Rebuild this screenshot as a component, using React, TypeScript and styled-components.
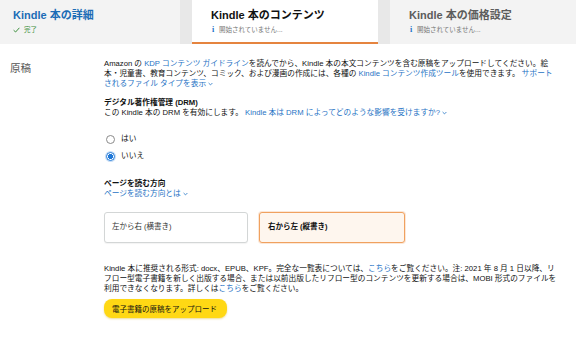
import React from "react";
import styled, { createGlobalStyle } from "styled-components";

const Global = createGlobalStyle`
  html, body { margin: 0; padding: 0; background: #fff; }
  body {
    font-family: "Liberation Sans", "Noto Sans CJK JP", sans-serif;
    color: #0f1111;
    width: 576px;
    height: 346px;
    overflow: hidden;
  }
  * { box-sizing: border-box; }
`;

const Header = styled.header`
  display: flex;
  gap: 12px;
  height: 44px;
  background: #e8e8e8;
`;

const Tab = styled.div<{ $w?: number; $pad: number; $active?: boolean }>`
  flex: ${(p) => (p.$w ? `0 0 ${p.$w}px` : "1 1 0")};
  background: ${(p) => (p.$active ? "#ffffff" : "#f3f3f3")};
  border-bottom: 2px solid ${(p) => (p.$active ? "#e5843f" : "transparent")};
  padding: 8px 0 0 ${(p) => p.$pad}px;
  display: flex;
  flex-direction: column;
  gap: 3px;
`;

const TabTitle = styled.div<{ $tone: "blue" | "dark" | "muted" }>`
  font-size: 11px;
  line-height: 14px;
  font-weight: 700;
  white-space: nowrap;
  color: ${(p) =>
    p.$tone === "blue" ? "#1c6cb6" : p.$tone === "dark" ? "#111111" : "#5c5c5c"};
`;

const TabStatus = styled.div`
  display: flex;
  align-items: center;
  gap: 4px;
  font-size: 6.5px;
  line-height: 9px;
  color: #777;
  white-space: nowrap;
`;

const InfoMark = styled.span`
  color: #1a73c8;
  font-family: "Liberation Serif", serif;
  font-size: 8px;
  font-weight: 700;
  width: 4px;
  text-align: center;
`;

const DoneText = styled.span`
  color: #3d8f3d;
`;

const Body = styled.main`
  display: grid;
  grid-template-columns: 104px 1fr;
  padding-top: 15px;
`;

const SectionLabel = styled.h2`
  margin: 2px 0 0 10px;
  font-size: 10.5px;
  line-height: 14px;
  font-weight: 400;
  color: #555;
`;

const Content = styled.div`
  display: flex;
  flex-direction: column;
  font-size: 7.7px;
  line-height: 10px;
`;

const Para = styled.p<{ $mt?: number }>`
  margin: ${(p) => p.$mt ?? 0}px 0 0;
  white-space: nowrap;
`;

const Heading = styled.h3<{ $mt: number }>`
  margin: ${(p) => p.$mt}px 0 0;
  font-size: 7.7px;
  line-height: 10px;
  font-weight: 700;
`;

const Link = styled.a`
  color: #1e72c4;
  text-decoration: none;
  cursor: pointer;
`;

const Chevron = () => (
  <svg width="5" height="4" viewBox="0 0 5 4" style={{ marginLeft: 2, verticalAlign: "middle" }}>
    <path d="M0.6 1 L2.5 2.9 L4.4 1" fill="none" stroke="#1e72c4" strokeWidth="0.8" />
  </svg>
);

const RadioGroup = styled.div`
  display: flex;
  flex-direction: column;
  gap: 5px;
  margin-top: 15px;
  margin-left: 2px;
`;

const RadioRow = styled.label`
  display: flex;
  align-items: center;
  gap: 6px;
  height: 12px;
  font-size: 7.7px;
`;

const RadioDot = styled.span<{ $checked?: boolean }>`
  width: 9px;
  height: 9px;
  border-radius: 50%;
  border: 1px solid ${(p) => (p.$checked ? "#1f78d8" : "#8a8a8a")};
  background: ${(p) =>
    p.$checked
      ? "radial-gradient(circle, #1f78d8 0 2.3px, #ffffff 2.6px 100%)"
      : "#fff"};
  box-shadow: ${(p) => (p.$checked ? "0 0 0 1px rgba(31,120,216,0.25)" : "none")};
`;

const Choices = styled.div`
  display: flex;
  gap: 11px;
  margin-top: 12.5px;
`;

const Choice = styled.div<{ $selected?: boolean }>`
  width: ${(p) => (p.$selected ? 146 : 144)}px;
  height: 31px;
  display: flex;
  align-items: center;
  padding-left: ${(p) => (p.$selected ? 8 : 7)}px;
  border-radius: 3px;
  border: 1px solid ${(p) => (p.$selected ? "#f0a15f" : "#d3d6d6")};
  background: ${(p) => (p.$selected ? "#fef6ee" : "#fff")};
  font-weight: ${(p) => (p.$selected ? 700 : 400)};
  font-size: 7.5px;
  color: ${(p) => (p.$selected ? "#111" : "#333")};
  box-shadow: ${(p) => (p.$selected ? "0 0 0 1px rgba(240,161,95,0.25)" : "0 1px 1px rgba(0,0,0,0.05)")};
`;

const UploadButton = styled.button`
  align-self: flex-start;
  margin-top: 4.5px;
  width: 123px;
  height: 19px;
  padding: 0 0 0 8px;
  text-align: left;
  border: none;
  border-radius: 8px;
  background: #ffd814;
  font-family: inherit;
  font-size: 7.5px;
  color: #0f1111;
  box-shadow: 0 1px 2px rgba(213, 169, 0, 0.4);
`;

export default function App() {
  return (
    <>
      <Global />
      <Header>
        <Tab $w={180} $pad={13}>
          <TabTitle $tone="blue">Kindle 本の詳細</TabTitle>
          <TabStatus>
            <svg width="7" height="6" viewBox="0 0 7 6">
              <path d="M0.6 3.2 L2.6 5 L6.4 0.8" fill="none" stroke="#3d8f3d" strokeWidth="1" />
            </svg>
            <DoneText>完了</DoneText>
          </TabStatus>
        </Tab>
        <Tab $pad={19} $active>
          <TabTitle $tone="dark">Kindle 本のコンテンツ</TabTitle>
          <TabStatus>
            <InfoMark>i</InfoMark>
            <span>開始されていません...</span>
          </TabStatus>
        </Tab>
        <Tab $pad={19}>
          <TabTitle $tone="muted">Kindle 本の価格設定</TabTitle>
          <TabStatus>
            <InfoMark>i</InfoMark>
            <span>開始されていません...</span>
          </TabStatus>
        </Tab>
      </Header>
      <Body>
        <SectionLabel>原稿</SectionLabel>
        <Content>
          <Para>
            Amazon の <Link>KDP コンテンツ ガイドライン</Link>を読んでから、Kindle 本の本文コンテンツを含む原稿をアップロードしてください。絵
            <br />
            本・児童書、教育コンテンツ、コミック、および漫画の作成には、各種の <Link>Kindle コンテンツ作成ツール</Link>を使用できます。 <Link>サポート</Link>
            <br />
            <Link>
              されるファイル タイプを表示
              <Chevron />
            </Link>
          </Para>
          <Heading $mt={9}>デジタル著作権管理 (DRM)</Heading>
          <Para>
            この Kindle 本の DRM を有効にします。 <Link>Kindle 本は DRM によってどのような影響を受けますか?<Chevron /></Link>
          </Para>
          <RadioGroup>
            <RadioRow>
              <RadioDot />
              はい
            </RadioRow>
            <RadioRow>
              <RadioDot $checked />
              いいえ
            </RadioRow>
          </RadioGroup>
          <Heading $mt={17}>ページを読む方向</Heading>
          <Para>
            <Link>ページを読む方向とは<Chevron /></Link>
          </Para>
          <Choices>
            <Choice>左から右 (横書き)</Choice>
            <Choice $selected>右から左 (縦書き)</Choice>
          </Choices>
          <Para $mt={21.5}>
            Kindle 本に推奨される形式: docx、EPUB、KPF。完全な一覧表については、<Link>こちら</Link>をご覧ください。注: 2021 年 8 月 1 日以降、リ
            <br />
            フロー型電子書籍を新しく出版する場合、または以前出版したリフロー型のコンテンツを更新する場合は、MOBI 形式のファイルを
            <br />
            利用できなくなります。詳しくは<Link>こちら</Link>をご覧ください。
          </Para>
          <UploadButton>電子書籍の原稿をアップロード</UploadButton>
        </Content>
      </Body>
    </>
  );
}
